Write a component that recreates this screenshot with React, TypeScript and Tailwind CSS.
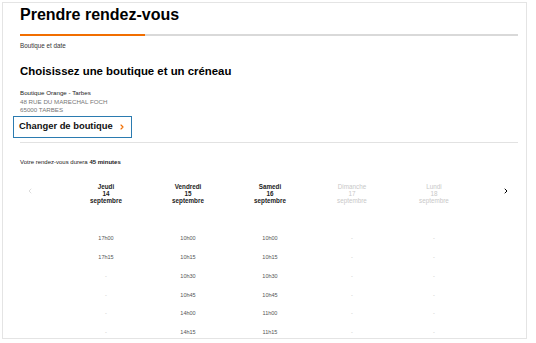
import { ChevronLeft, ChevronRight } from "lucide-react";

const days = [
    { name: "Jeudi", num: "14", month: "septembre", enabled: true, slots: ["17h00", "17h15", "-", "-", "-", "-"] },
    { name: "Vendredi", num: "15", month: "septembre", enabled: true, slots: ["10h00", "10h15", "10h30", "10h45", "14h00", "14h15"] },
    { name: "Samedi", num: "16", month: "septembre", enabled: true, slots: ["10h00", "10h15", "10h30", "10h45", "11h00", "11h15"] },
    { name: "Dimanche", num: "17", month: "septembre", enabled: false, slots: ["-", "-", "-", "-", "-", "-"] },
    { name: "Lundi", num: "18", month: "septembre", enabled: false, slots: ["-", "-", "-", "-", "-", "-"] },
];

export default function App() {
    return (
        <div className="w-[536px] h-[343px] bg-white pt-[2px] pl-[2px] font-['Liberation_Sans',Arial,sans-serif] overflow-hidden">
            <div className="w-[525px] h-[337px] border border-[#e4e4e4] pl-[17px] pr-[8px] overflow-hidden">
                <h1 className="mt-[2px] text-[16px] leading-[20px] font-bold text-black">Prendre rendez-vous</h1>

                <div className="mt-[9px] flex h-[2px]">
                    <div className="w-[125px] bg-[#f16e00]" />
                    <div className="flex-1 bg-[#d9d9d9]" />
                </div>
                <p className="mt-[6px] text-[6.3px] leading-[8px] text-[#333]">Boutique et date</p>

                <h2 className="mt-[14px] text-[11.4px] leading-[14px] font-bold text-black">
                    Choisissez une boutique et un créneau
                </h2>

                <div className="mt-[11px] text-[6.2px] leading-[8.5px]">
                    <p className="text-[#222]">Boutique Orange - Tarbes</p>
                    <p className="text-[#777]">48 RUE DU MARECHAL FOCH</p>
                    <p className="text-[#777]">65000 TARBES</p>
                </div>

                <div className="mt-[1px] -ml-[7px] w-[119px] h-[22px] border-[1.5px] border-[#2b7bb0] flex items-center pl-[5px] gap-[5px]">
                    <span className="text-[9.4px] font-bold text-[#111]">Changer de boutique</span>
                    <ChevronRight size={8} strokeWidth={3.5} className="text-[#f16e00]" />
                </div>

                <div className="mt-[4px] h-px bg-[#e2e2e2]" />

                <p className="mt-[15px] text-[6px] leading-[8px] text-[#222]">
                    Votre rendez-vous durera <span className="font-bold">45 minutes</span>
                </p>

                <div className="mt-[17px] flex">
                    <div className="w-[45px] pt-[4px] pl-[6px]">
                        <ChevronLeft size={8} strokeWidth={1.5} className="text-[#bbb]" />
                    </div>
                    {days.map((d) => (
                        <div key={d.name} className="w-[82px] flex flex-col items-center">
                            <div className={`text-center text-[6.3px] leading-[7.2px] ${d.enabled ? "font-bold text-[#222]" : "text-[#c8c8c8]"}`}>
                                <p>{d.name}</p>
                                <p>{d.num}</p>
                                <p>{d.month}</p>
                            </div>
                            <div className="mt-[31px] flex flex-col items-center gap-[12.8px]">
                                {d.slots.map((s, i) => (
                                    <span
                                        key={i}
                                        className={`text-[5.5px] leading-[6px] ${s === "-" ? "text-[#c4c4c4]" : "text-[#555]"}`}
                                    >
                                        {s}
                                    </span>
                                ))}
                            </div>
                        </div>
                    ))}
                    <div className="flex-1 pt-[4px] flex justify-end pr-[8px]">
                        <ChevronRight size={8} strokeWidth={3} className="text-black" />
                    </div>
                </div>
            </div>
        </div>
    );
}
